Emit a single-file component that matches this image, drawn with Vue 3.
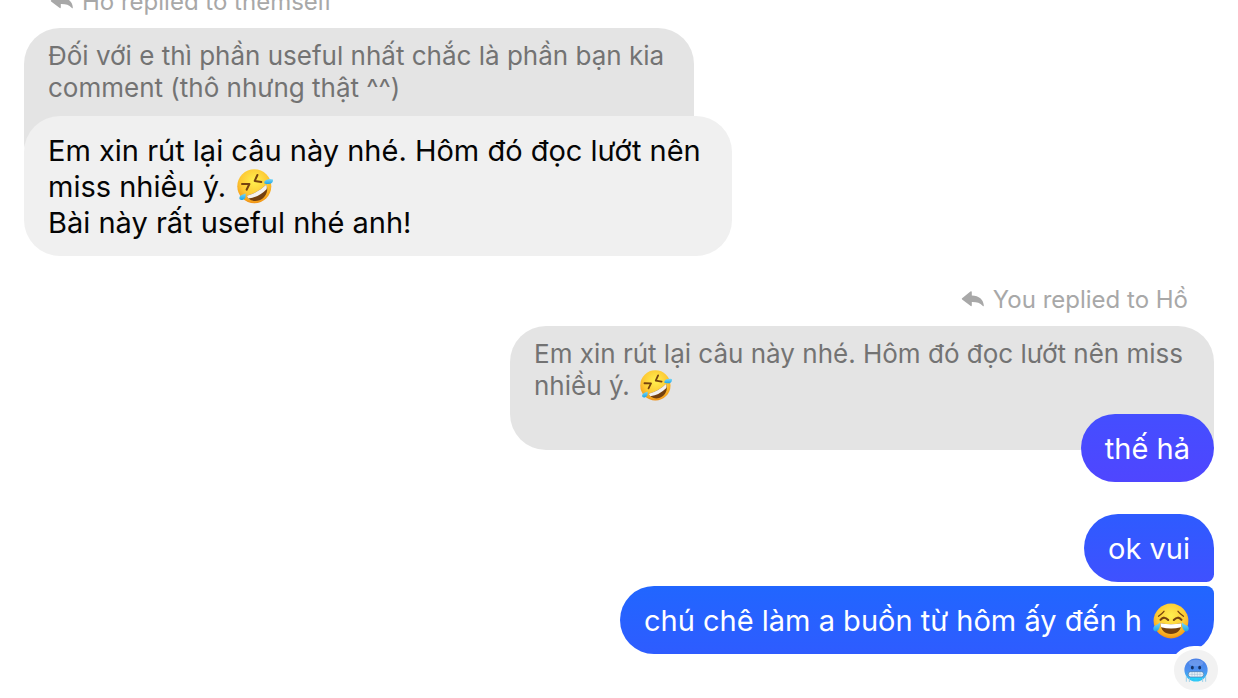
<script setup>
import { h } from 'vue'

const Emoji = (props) => {
  const ids = { rofl: '🤣', joy: '😂', cold: '🥶' }
  return h(
    'svg',
    { class: 'emoji', viewBox: '0 0 36 36', role: 'img', 'aria-label': ids[props.name] },
    [h('use', { href: '#emoji-' + props.name })],
  )
}
Emoji.props = ['name']

const threads = [
  {
    side: 'theirs',
    label: 'Hồ replied to themself',
    quote: [{ text: 'Đối với e thì phần useful nhất chắc là phần bạn kia comment (thô nhưng thật ^^)' }],
    messages: [
      {
        shape: 'block',
        parts: [
          { text: 'Em xin rút lại câu này nhé. Hôm đó đọc lướt nên miss nhiều ý. ' },
          { emoji: 'rofl' },
          { text: '\nBài này rất useful nhé anh!' },
        ],
      },
    ],
  },
  {
    side: 'mine',
    label: 'You replied to Hồ',
    quote: [{ text: 'Em xin rút lại câu này nhé. Hôm đó đọc lướt nên miss nhiều ý. ' }, { emoji: 'rofl' }],
    messages: [{ shape: 'single', parts: [{ text: 'thế hả' }] }],
  },
  {
    side: 'mine',
    messages: [
      { shape: 'first', parts: [{ text: 'ok vui' }] },
      {
        shape: 'last',
        parts: [{ text: 'chú chê làm a buồn từ hôm ấy đến h ' }, { emoji: 'joy' }],
        reaction: 'cold',
      },
    ],
  },
]
</script>

<template>
  <main class="chat">
    <svg class="defs" width="0" height="0" aria-hidden="true">
      <defs>
        <radialGradient id="face" cx="0.5" cy="0.35" r="0.68">
          <stop offset="0" stop-color="#fff04f" />
          <stop offset="0.6" stop-color="#fdc934" />
          <stop offset="0.86" stop-color="#f7a51e" />
          <stop offset="1" stop-color="#e98412" />
        </radialGradient>
        <linearGradient id="tear" x1="0" y1="0" x2="0" y2="1">
          <stop offset="0" stop-color="#7ad7f8" />
          <stop offset="1" stop-color="#1ca6e8" />
        </linearGradient>
        <linearGradient id="ice" x1="0" y1="0" x2="0" y2="1">
          <stop offset="0" stop-color="#4a7fe6" />
          <stop offset="0.5" stop-color="#4d90f0" />
          <stop offset="1" stop-color="#2fcbf6" />
        </linearGradient>
        <symbol id="emoji-rofl" viewBox="0 0 36 36">
          <circle cx="17.3" cy="17.3" r="17" fill="url(#face)" />
          <g fill="none" stroke="#75420f" stroke-width="2" stroke-linecap="round" stroke-linejoin="round">
            <path d="M5 14.9 L12.4 15 L9.6 20.7" />
            <path d="M20.4 6 L17.7 11.9 L24.3 13.1" />
          </g>
          <path d="M9.8 26.8 Q21 24 29.4 15.6 C32 22 28.5 29 22.5 31.3 C16.5 33.3 11.5 31 9.8 26.8Z" fill="#74400f" />
          <path d="M9.8 26.8 Q21 24 29.4 15.6 Q30.2 18 29.6 20.2 Q22 28 11.6 29.6 Q10.4 28.4 9.8 26.8Z" fill="#f4f1ee" />
          <path d="M27.4 12.6 C29 10 33 9.4 36 10.5 C36.2 14.4 33 16 27.4 14.4Z" fill="url(#tear)" />
          <path d="M8.4 24.2 C9.3 28.2 7.8 31 4.4 31 C2 30.9 1.8 28.3 3.5 26.8 C4.8 25.5 7 25.2 8.4 24.2Z" fill="url(#tear)" />
        </symbol>
        <symbol id="emoji-joy" viewBox="0 0 36 36">
          <circle cx="18" cy="18" r="17.4" fill="url(#face)" />
          <g fill="none" stroke="#75420f" stroke-width="2.1" stroke-linecap="round">
            <path d="M5.5 13.2 Q9 10.8 11 8.3" stroke-width="1.3" />
            <path d="M30.5 13.2 Q27 10.8 25 8.3" stroke-width="1.3" />
            <path d="M7.5 16.8 Q11 12.5 15.2 16.9" />
            <path d="M20.8 16.9 Q25 12.5 28.5 16.8" />
          </g>
          <path d="M7.5 20.2 Q18 22.3 28.5 20.2 C28.5 27 24 31 18 31 C12 31 7.5 27 7.5 20.2Z" fill="#74400f" />
          <path d="M7.5 20.2 Q18 22.3 28.5 20.2 Q28.5 22.5 27.8 24.2 Q18 26.8 8.2 24.2 Q7.5 22.5 7.5 20.2Z" fill="#fff" />
          <path d="M7 19.2 C7.5 24 5.7 28.3 2.6 28.4 C-.2 28.4 -.3 24.7 1.4 23.1 C3.2 21.6 5.5 21.4 7 19.2Z" fill="url(#tear)" />
          <path d="M29 19.2 C28.5 24 30.3 28.3 33.4 28.4 C36.2 28.4 36.3 24.7 34.6 23.1 C32.8 21.6 30.5 21.4 29 19.2Z" fill="url(#tear)" />
        </symbol>
        <symbol id="emoji-cold" viewBox="0 0 36 36">
          <circle cx="18" cy="18" r="17.4" fill="url(#ice)" />
          <ellipse cx="18" cy="7.5" rx="11" ry="5" fill="#86a9f0" opacity="0.5" />
          <ellipse cx="12.5" cy="14.5" rx="2.2" ry="2.7" fill="#173367" />
          <ellipse cx="23.5" cy="14.5" rx="2.2" ry="2.7" fill="#173367" />
          <rect x="6.5" y="20.5" width="23" height="8" rx="3.5" fill="#e8f3fb" stroke="#4c75a7" stroke-width="1" />
          <path d="M7 24.5H29 M12 21V28 M16 21V28 M20 21V28 M24 21V28" stroke="#9db8d0" stroke-width="0.8" />
          <path d="M9 29.5H27L25 33L21.5 31.5L18 34.5L14.5 31.5L11 33Z" fill="#27d3f8" />
          <path d="M3.5 28V35 M8 31V35.5 M28 31V35.5 M32.5 28V35" stroke="#9ccfe8" stroke-width="1.5" stroke-linecap="round" />
        </symbol>
      </defs>
    </svg>

    <section v-for="(thread, t) in threads" :key="t" class="thread" :class="thread.side">
      <p v-if="thread.label" class="label">
        <svg class="reply" viewBox="0 0 24 20" aria-hidden="true">
          <path d="M1.1 8.3 L9.4 1.5 Q10.8 .6 10.8 2.4 V5.5 C18.2 5.8 22.2 9.4 22.8 15.2 Q22.9 17.2 21.6 15.7 C19 12.7 15.8 11.8 10.8 11.9 V14.9 Q10.8 16.8 9.4 15.8 L1.1 9.4 Q.4 8.8 1.1 8.3Z" />
        </svg>
        <span>{{ thread.label }}</span>
      </p>
      <blockquote v-if="thread.quote" class="quote">
        <template v-for="(part, p) in thread.quote" :key="p">
          <Emoji v-if="part.emoji" :name="part.emoji" /><template v-else>{{ part.text }}</template>
        </template>
      </blockquote>
      <div v-for="(message, m) in thread.messages" :key="m" class="bubble" :class="message.shape">
        <template v-for="(part, p) in message.parts" :key="p">
          <Emoji v-if="part.emoji" :name="part.emoji" /><template v-else>{{ part.text }}</template>
        </template>
        <span v-if="message.reaction" class="reaction"><Emoji :name="message.reaction" /></span>
      </div>
    </section>
  </main>
</template>

<style>
body {
  margin: 0;
  background: #fff;
}
</style>

<style scoped>
.chat {
  box-sizing: border-box;
  height: 100vh;
  padding: 0 24px 44px;
  display: flex;
  flex-direction: column;
  justify-content: flex-end;
  overflow: hidden;
  font-family: Inter, "Noto Sans", sans-serif;
  color: #050505;
}

.defs {
  position: absolute;
}

.thread {
  display: flex;
  flex-direction: column;
  flex-shrink: 0;
  align-items: flex-start;
}

.thread.mine {
  align-items: flex-end;
  margin-top: 32px;
}

.thread.theirs + .thread.mine {
  margin-top: 28px;
}

.label {
  display: flex;
  align-items: center;
  gap: 8px;
  margin: 0 26px 10px;
  font-size: 24px;
  line-height: 32px;
  color: #a8a8a8;
}

.reply {
  width: 24px;
  height: 20px;
  fill: #a8a8a8;
}

.quote {
  box-sizing: border-box;
  max-width: 704px;
  margin: 0 0 -36px;
  padding: 12px 24px 48px;
  border-radius: 36px 36px 8px 36px;
  background: #e4e4e4;
  color: #737373;
  font-size: 26px;
  line-height: 32px;
}

.theirs .quote {
  max-width: 670px;
  border-radius: 36px 36px 36px 8px;
}

.bubble {
  box-sizing: border-box;
  position: relative;
  max-width: 708px;
  padding: 17px 24px 15px;
  border-radius: 36px;
  background: #f0f0f0;
  font-size: 29px;
  line-height: 36px;
  white-space: pre-line;
}

.mine .bubble {
  color: #fff;
}

.mine .single {
  background: linear-gradient(#444eff, #4f46ff);
}

.mine .first {
  margin-bottom: 4px;
  border-bottom-right-radius: 8px;
  background: linear-gradient(#2e5bff, #3f51ff);
}

.mine .last {
  border-top-right-radius: 8px;
  background: linear-gradient(#2166ff, #2e5cff);
}

.emoji {
  display: inline-block;
  width: 36px;
  height: 36px;
  margin: 0 1px 0 3px;
  vertical-align: -6px;
}

.bubble > .emoji {
  margin-top: -6px;
  margin-bottom: -2px;
}

.quote > .emoji {
  width: 32px;
  height: 32px;
  vertical-align: -5px;
  margin-top: -4px;
  margin-bottom: -2px;
}

.reaction {
  position: absolute;
  right: -8px;
  bottom: -40px;
  display: flex;
  align-items: center;
  justify-content: center;
  width: 44px;
  height: 40px;
  border: 4px solid #fff;
  border-radius: 24px;
  background: #f2f2f2;
}

.reaction > .emoji {
  width: 24px;
  height: 24px;
  margin: 0;
}
</style>
